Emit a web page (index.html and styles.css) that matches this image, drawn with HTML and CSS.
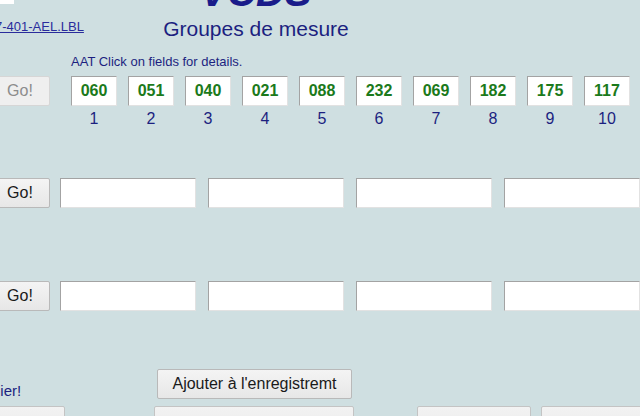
FILE: index.html
```html
<!DOCTYPE html>
<html lang="fr">
<head>
<meta charset="utf-8">
<title>VCDS - Groupes de mesure</title>
<link rel="stylesheet" href="styles.css">
</head>
<body>
<div class="page">
  <header class="header">
    <div class="hleft">
      <div class="chip"></div>
      <a class="lbl" href="#">7-401-AEL.LBL</a>
    </div>
    <div class="htitle">
      <div class="brand">VCDS</div>
      <div class="subtitle">Groupes de mesure</div>
    </div>
  </header>

  <div class="hint">AAT Click on fields for details.</div>

  <div class="content">
    <div class="row row1">
      <button class="btn go" disabled>Go!</button>
      <div class="cells">
        <div class="cell"><div class="val">060</div><div class="num">1</div></div>
        <div class="cell"><div class="val">051</div><div class="num">2</div></div>
        <div class="cell"><div class="val">040</div><div class="num">3</div></div>
        <div class="cell"><div class="val">021</div><div class="num">4</div></div>
        <div class="cell"><div class="val">088</div><div class="num">5</div></div>
        <div class="cell"><div class="val">232</div><div class="num">6</div></div>
        <div class="cell"><div class="val">069</div><div class="num">7</div></div>
        <div class="cell"><div class="val">182</div><div class="num">8</div></div>
        <div class="cell"><div class="val">175</div><div class="num">9</div></div>
        <div class="cell"><div class="val">117</div><div class="num">10</div></div>
      </div>
    </div>

    <div class="row row2">
      <button class="btn go">Go!</button>
      <div class="fields">
        <div class="field"></div>
        <div class="field"></div>
        <div class="field"></div>
        <div class="field"></div>
      </div>
    </div>

    <div class="row row3">
      <button class="btn go">Go!</button>
      <div class="fields">
        <div class="field"></div>
        <div class="field"></div>
        <div class="field"></div>
        <div class="field"></div>
      </div>
    </div>

    <div class="row row4">
      <div class="note"><span class="note-text">fichier!</span></div>
      <button class="btn add">Ajouter à l'enregistremt</button>
    </div>

    <div class="row row5">
      <button class="btn b1"></button>
      <button class="btn b2"></button>
      <button class="btn b3"></button>
      <button class="btn b4"></button>
    </div>
  </div>
</div>
</body>
</html>
```

FILE: styles.css
```css
html, body {
  margin: 0;
  padding: 0;
}

body {
  background: #cfdfe1;
  font-family: "Liberation Sans", Arial, sans-serif;
  color: #1c1f80;
}

.page {
  width: 640px;
  height: 416px;
  overflow: hidden;
}

.header {
  display: flex;
  margin-top: -28px;
}

.hleft {
  width: 100px;
  padding-top: 28px;
}

.chip {
  width: 14px;
  height: 4px;
  background: #ffffff;
}

.lbl {
  display: block;
  margin-top: 15px;
  margin-left: -5px;
  font-size: 13px;
  line-height: 16px;
  color: #2a2c9c;
  text-decoration: underline;
  white-space: nowrap;
}

.htitle {
  width: 312px;
  text-align: center;
}

.brand {
  font-size: 40px;
  line-height: 40px;
  font-weight: bold;
  font-style: italic;
  color: #1a1c8a;
}

.subtitle {
  margin-top: 5px;
  font-size: 21px;
  line-height: 24px;
  color: #1c1f80;
}

.hint {
  margin-top: 13px;
  margin-left: 71px;
  font-size: 13px;
  line-height: 16px;
  color: #1c1f80;
}

.content {
  margin-left: -10px;
}

.row {
  display: flex;
  align-items: flex-start;
}

.row1 { margin-top: 6px; }
.row2 { margin-top: 50px; }
.row3 { margin-top: 73px; }
.row4 { margin-top: 58px; }
.row5 { margin-top: 7px; }

.btn {
  box-sizing: border-box;
  height: 30px;
  margin: 0;
  padding: 0;
  border: 1px solid #b9b9b9;
  border-radius: 2px;
  background: linear-gradient(#f4f4f4, #e7e7e7);
  font-family: "Liberation Sans", Arial, sans-serif;
  font-size: 16px;
  color: #1a1a1a;
}

.go {
  width: 60px;
}

.go:disabled {
  border-color: #d6d6d6;
  background: #efefef;
  color: #8c8c8c;
}

.cells {
  display: flex;
  gap: 11px;
  margin-left: 21px;
}

.cell {
  width: 46px;
  display: flex;
  flex-direction: column;
  align-items: center;
}

.val {
  box-sizing: border-box;
  width: 46px;
  height: 30px;
  background: #ffffff;
  border: 1px solid;
  border-color: #a3a3a3 #e2e2e2 #e2e2e2 #a3a3a3;
  font-size: 16px;
  line-height: 28px;
  font-weight: bold;
  color: #1b7a1b;
  text-align: center;
}

.num {
  margin-top: 4px;
  font-size: 16px;
  line-height: 18px;
  color: #1c1f80;
}

.fields {
  display: flex;
  gap: 12px;
  margin-left: 10px;
}

.field {
  box-sizing: border-box;
  flex: none;
  width: 136px;
  height: 30px;
  background: #ffffff;
  border: 1px solid;
  border-color: #a3a3a3 #e2e2e2 #e2e2e2 #a3a3a3;
}

.row4 {
  align-items: flex-end;
}

.note {
  width: 167px;
  flex: none;
  margin-bottom: -1px;
  font-size: 15px;
  line-height: 18px;
  color: #1c1f80;
  white-space: nowrap;
}

.note-text {
  display: inline-block;
  margin-left: -13px;
}

.add {
  width: 195px;
  flex: none;
}

.row5 .btn {
  flex: none;
  border-color: #c4c4c4;
  background: linear-gradient(#f3f3f3, #e9e9e9);
}

.b1 { width: 75px; }
.b2 { width: 200px; margin-left: 89px; }
.b3 { width: 114px; margin-left: 63px; }
.b4 { width: 110px; margin-left: 10px; }
```
